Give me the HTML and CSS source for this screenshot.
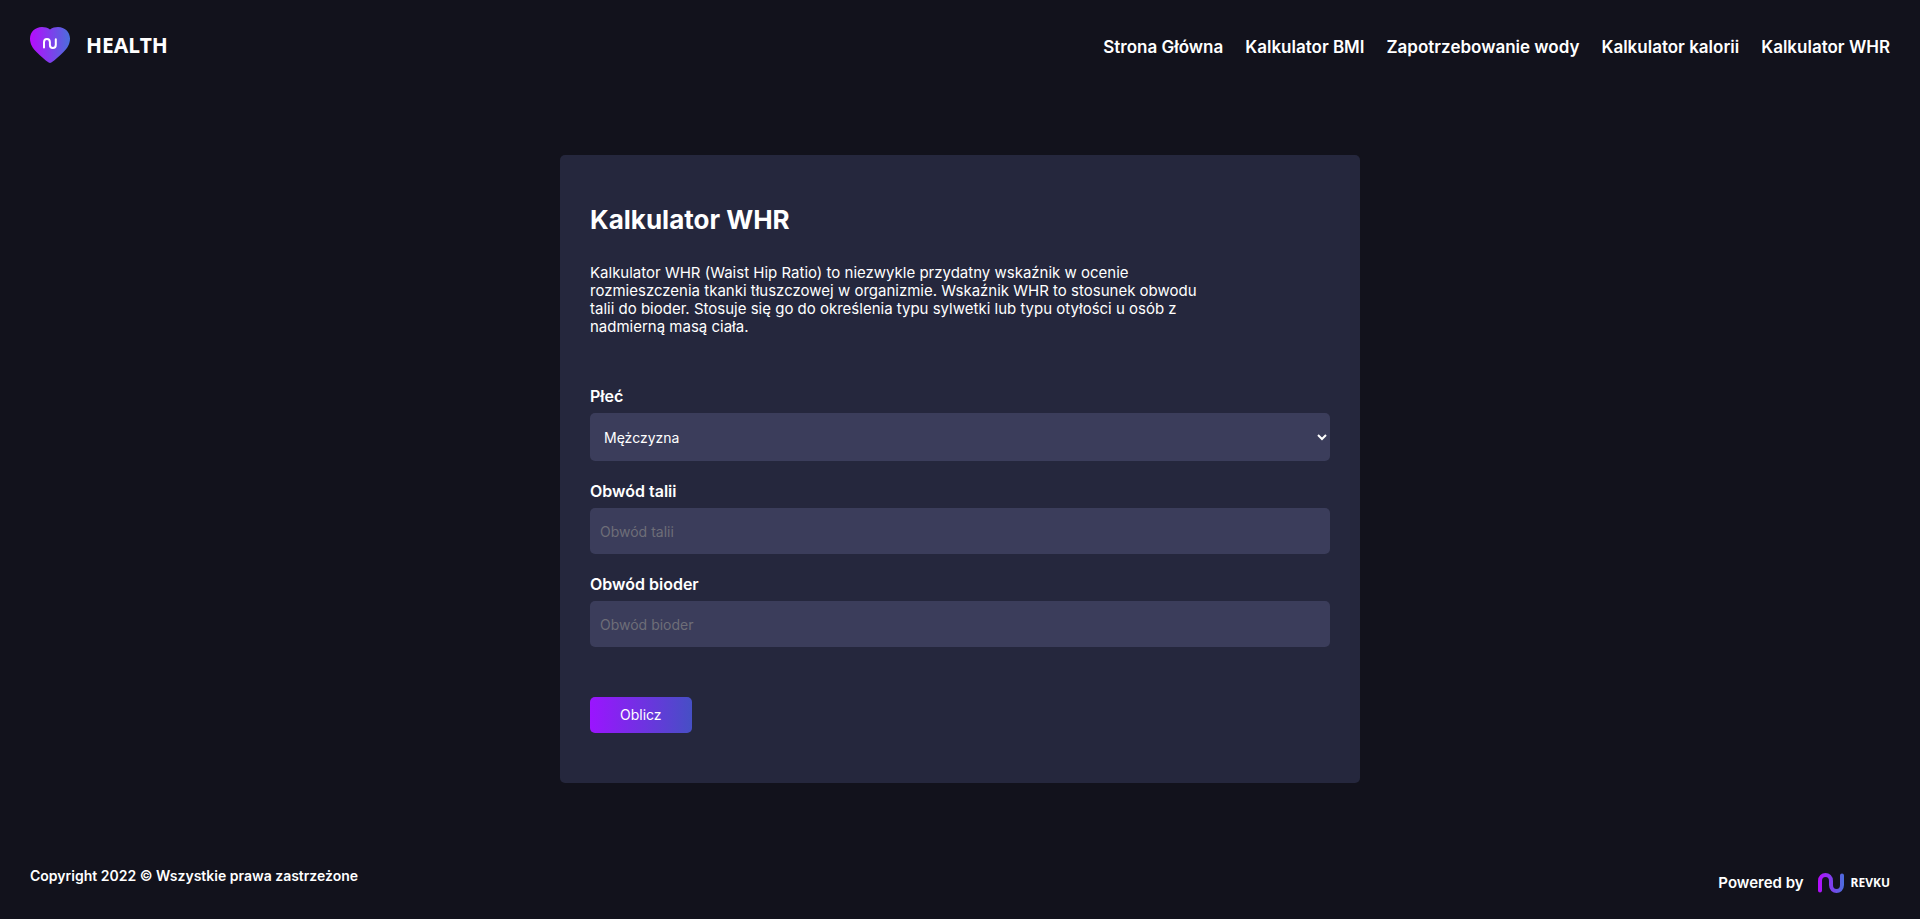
FILE: index.html
```html
<!DOCTYPE html>
<html lang="pl">
<head>
<meta charset="utf-8">
<meta name="viewport" content="width=device-width, initial-scale=1">
<title>Kalkulator WHR</title>
<link rel="stylesheet" href="styles.css">
</head>
<body>
<header class="header">
  <a class="brand" href="#">
    <svg class="brand-icon" viewBox="0 0 40 36" aria-hidden="true">
      <defs>
        <linearGradient id="heart" x1="0" x2="1" y1="0" y2="0">
          <stop offset="0" stop-color="#b70bfd"/>
          <stop offset="1" stop-color="#4a6fdc"/>
        </linearGradient>
      </defs>
      <path fill="url(#heart)" d="M20 2.4C17.6.8 14.800 0 12 0 5.200 0 0 5 0 11.500 0 17 2.500 21 6.500 25c4 4 8.500 8 12.200 10.600.8.5 1.800.5 2.600 0C25 33 29.500 29 33.500 25c4-4 6.500-8 6.500-13.500C40 5 34.800 0 28 0c-2.800 0-5.600.8-8 2.400z"/>
      <path class="mark" stroke="#fff" stroke-width="2" d="M14 20.500v-5.300c0-4.400 5.900-4.400 5.900 0v2.600c0 4.400 5.900 4.400 5.900 0v-5.600"/>
    </svg>
    <span class="brand-name">HEALTH</span>
  </a>
  <nav class="nav">
    <a href="#">Strona Główna</a>
    <a href="#">Kalkulator BMI</a>
    <a href="#">Zapotrzebowanie wody</a>
    <a href="#">Kalkulator kalorii</a>
    <a href="#">Kalkulator WHR</a>
  </nav>
</header>
<main class="main">
  <form class="card">
    <h1 class="title">Kalkulator WHR</h1>
    <p class="intro">Kalkulator WHR (Waist Hip Ratio) to niezwykle przydatny wskaźnik w ocenie<br>rozmieszczenia tkanki tłuszczowej w organizmie. Wskaźnik WHR to stosunek obwodu<br>talii do bioder. Stosuje się go do określenia typu sylwetki lub typu otyłości u osób z<br>nadmierną masą ciała.</p>
    <div class="field">
      <label for="sex">Płeć</label>
      <select class="control select" id="sex">
        <option>Mężczyzna</option>
        <option>Kobieta</option>
      </select>
    </div>
    <div class="field">
      <label for="waist">Obwód talii</label>
      <input class="control" id="waist" type="text" placeholder="Obwód talii">
    </div>
    <div class="field">
      <label for="hips">Obwód bioder</label>
      <input class="control" id="hips" type="text" placeholder="Obwód bioder">
    </div>
    <button class="submit" type="button">Oblicz</button>
  </form>
</main>
<footer class="footer">
  <p class="copyright">Copyright 2022 © Wszystkie prawa zastrzeżone</p>
  <div class="powered">
    <span>Powered by</span>
    <a class="revku" href="#">
      <svg class="revku-icon" viewBox="0 0 26 20" aria-hidden="true">
        <defs>
          <linearGradient id="wave" gradientUnits="userSpaceOnUse" x1="0" x2="26" y1="0" y2="0">
            <stop offset="0" stop-color="#b70bfd"/>
            <stop offset="1" stop-color="#4a6fdc"/>
          </linearGradient>
        </defs>
        <path class="mark" stroke="url(#wave)" stroke-width="4" d="M2 17.500V8c0-8 11-8 11 0v4c0 8 11 8 11 0V2.500"/>
      </svg>
      <span class="revku-name">REVKU</span>
    </a>
  </div>
</footer>
</body>
</html>
```
FILE: styles.css
```css
* {
  box-sizing: border-box;
}

body {
  margin: 0;
  min-height: 100vh;
  display: flex;
  flex-direction: column;
  background: #12121c;
  color: #fff;
  font-family: Inter, "Open Sans", sans-serif;
}

a {
  color: inherit;
  text-decoration: none;
}

.header {
  display: flex;
  justify-content: space-between;
  align-items: center;
  flex-wrap: wrap;
  padding: 27px 30px;
}

.brand {
  display: flex;
  align-items: center;
  gap: 16px;
}

.brand-icon {
  width: 40px;
  height: 36px;
}

.mark {
  fill: none;
  stroke-linecap: round;
}

.brand-name {
  font: 700 21px/28px "Noto Sans", sans-serif;
}

.nav {
  display: flex;
  flex-wrap: wrap;
  gap: 22px;
  padding-top: 4px;
  font-size: 17px;
  font-weight: 600;
  line-height: 20px;
}

.main {
  flex: 1;
  display: flex;
  justify-content: center;
  align-items: flex-start;
  padding: 65px 0;
}

.card {
  width: 100%;
  max-width: 800px;
  padding: 50px 30px;
  border-radius: 5px;
  background: #25273d;
}

.title {
  margin: 0 0 29px;
  font-size: 26px;
  font-weight: 700;
  line-height: 30px;
}

.intro {
  margin: 0 0 50px;
  font-size: 15px;
  line-height: 18px;
}

.field {
  display: flex;
  flex-direction: column;
  gap: 7px;
  margin-bottom: 20px;
}

.field label {
  font-size: 16px;
  font-weight: 600;
  line-height: 20px;
}

.control {
  width: 100%;
  height: 46px;
  padding: 0 10px;
  border: 0;
  border-radius: 5px;
  background: #3b3d5b;
  color: #fff;
  font: 400 14px/18px Inter, "Open Sans", sans-serif;
}

.control::placeholder {
  color: #6e6e78;
}

.select {
  height: 48px;
}

.submit {
  display: block;
  height: 36px;
  margin-top: 50px;
  padding: 0 30px;
  border: 0;
  border-radius: 5px;
  background: linear-gradient(to right, #9b14ff, #464fc5);
  color: #fff;
  font: 400 14px/18px Inter, "Open Sans", sans-serif;
}

.footer {
  display: flex;
  justify-content: space-between;
  flex-wrap: wrap;
  padding: 0 30px 26px;
  font-size: 15px;
  font-weight: 600;
  line-height: 20px;
}

.copyright {
  margin: 0;
  font-size: 14px;
}

.powered,
.revku {
  display: flex;
  align-items: center;
}

.powered {
  gap: 14px;
  padding-top: 7px;
}

.revku {
  gap: 7px;
}

.revku-icon {
  width: 26px;
  height: 20px;
}

.revku-name {
  font: 700 12px/16px "Noto Sans", sans-serif;
}
```
